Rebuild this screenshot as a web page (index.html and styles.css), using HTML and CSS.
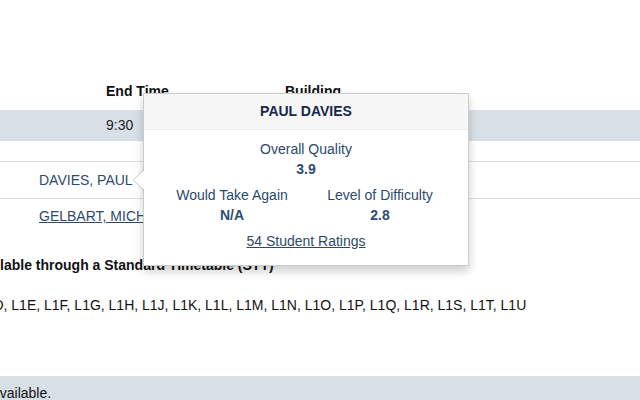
FILE: index.html
```html
<!DOCTYPE html>
<html>
<head>
<meta charset="utf-8">
<link rel="stylesheet" href="styles.css">
</head>
<body>
<div class="page">
  <div class="table">
    <div class="row thead">
      <div class="c1"></div>
      <div class="c2">End Time</div>
      <div class="c3">Building</div>
    </div>
    <div class="row band">
      <div class="c1"></div>
      <div class="c2">9:30</div>
      <div class="c3"></div>
    </div>
    <div class="row spacer"></div>
    <div class="row name-row">
      <div class="name">DAVIES, PAUL</div>
    </div>
    <div class="row name-row last">
      <a class="name link" href="#">GELBART, MICHAEL</a>
    </div>
  </div>
  <div class="section-title"><span class="shift-a">Available through a Standard Timetable (STT)</span></div>
  <div class="codes"><span class="shift-b">L1A, L1B, L1C, L1D, L1E, L1F, L1G, L1H, L1J, L1K, L1L, L1M, L1N, L1O, L1P, L1Q, L1R, L1S, L1T, L1U</span></div>
  <div class="bottom-band"><span class="shift-c">available.</span></div>

  <div class="popover">
    <div class="arrow"></div>
    <div class="pop-title">PAUL DAVIES</div>
    <div class="pop-content">
      <div class="stat">
        <div class="label">Overall Quality</div>
        <div class="value">3.9</div>
      </div>
      <div class="stat-pair">
        <div class="stat">
          <div class="label">Would Take Again</div>
          <div class="value">N/A</div>
        </div>
        <div class="stat">
          <div class="label">Level of Difficulty</div>
          <div class="value">2.8</div>
        </div>
      </div>
      <a class="ratings" href="#">54 Student Ratings</a>
    </div>
  </div>
</div>
</body>
</html>
```
FILE: styles.css
```css
html, body {
  margin: 0;
  padding: 0;
  background: #fff;
}
body {
  font-family: "Liberation Sans", Arial, Helvetica, sans-serif;
  font-size: 14px;
  color: #1a1a1a;
  width: 640px;
  height: 400px;
  overflow: hidden;
}
.page {
  position: relative;
  width: 640px;
  height: 400px;
  overflow: hidden;
}
.row {
  display: flex;
}
.c1 { width: 106px; }
.c2 { width: 179px; }
.c3 { flex: 1; }
.thead {
  padding: 81px 0 9px;
  line-height: 20px;
  font-weight: bold;
  color: #111;
}
.band {
  background: #d8dfe6;
  height: 31px;
  line-height: 31px;
  color: #222;
}
.spacer {
  height: 20px;
  border-bottom: 1px solid #dcdcdc;
}
.name-row {
  height: 36px;
  line-height: 36px;
  padding-left: 39px;
  border-bottom: 1px solid #dcdcdc;
}
.name-row.last {
  height: 34px;
  line-height: 34px;
  border-bottom: none;
}
.name {
  color: #2d4a6b;
}
.link {
  text-decoration: underline;
}
.section-title {
  margin-top: 22px;
  line-height: 20px;
  font-weight: bold;
  white-space: nowrap;
  color: #111;
}
.shift-a { margin-left: -29px; }
.codes {
  margin-top: 20px;
  line-height: 20px;
  white-space: nowrap;
  color: #111;
}
.shift-b { margin-left: -121px; display: inline-block; }
.shift-c { margin-left: -8px; display: inline-block; }
.bottom-band {
  margin-top: 61px;
  background: #d8dfe6;
  height: 34px;
  line-height: 34px;
  white-space: nowrap;
  color: #111;
}

.popover {
  position: absolute;
  left: 143px;
  top: 93px;
  width: 324px;
  background: #fff;
  border: 1px solid rgba(0, 0, 0, 0.2);
  box-shadow: 0 5px 10px rgba(0, 0, 0, 0.2);
  border-radius: 1px;
  text-align: center;
}
.arrow {
  position: absolute;
  left: -11px;
  top: 75px;
  width: 0;
  height: 0;
  border-style: solid;
  border-width: 11px 11px 11px 0;
  border-color: transparent rgba(0, 0, 0, 0.22) transparent transparent;
}
.arrow::after {
  content: "";
  position: absolute;
  left: 1px;
  top: -10px;
  border-style: solid;
  border-width: 10px 10px 10px 0;
  border-color: transparent #fff transparent transparent;
}
.pop-title {
  background: #f7f7f7;
  border-bottom: 1px solid #ebebeb;
  padding: 8px 14px;
  line-height: 19px;
  font-weight: bold;
  color: #15294a;
}
.pop-content {
  padding: 9px 14px 14px;
  display: flex;
  flex-direction: column;
  align-items: center;
  color: #2b4a6c;
}
.stat {
  display: flex;
  flex-direction: column;
  align-items: center;
}
.stat-pair {
  display: flex;
  align-self: stretch;
  margin-top: 6px;
}
.stat-pair .stat {
  flex: 1;
}
.label {
  line-height: 20px;
}
.value {
  line-height: 20px;
  font-weight: bold;
  color: #2c4e70;
}
.ratings {
  margin-top: 6px;
  line-height: 20px;
  color: #2b4a6c;
  text-decoration: underline;
}
```
